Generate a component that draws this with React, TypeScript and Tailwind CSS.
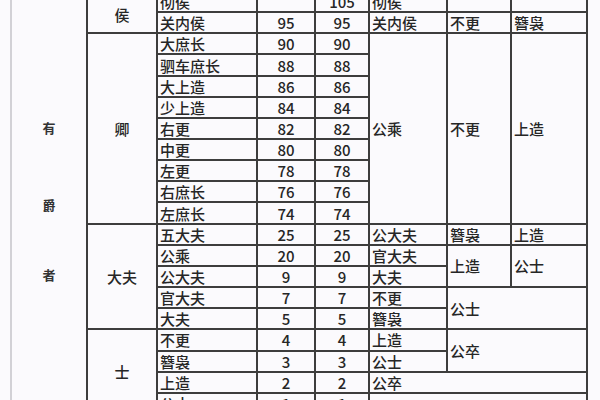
type Cell = { text: string; cls: string; center?: boolean };

// grid positions written out in full so tailwind picks them up
const cells: Cell[] = [
  // 侯
  { text: '侯', cls: 'col-start-2 row-start-1 row-span-2 pt-[5px]', center: true },
  { text: '彻侯', cls: 'col-start-3 row-start-1' },
  { text: '', cls: 'col-start-4 row-start-1', center: true },
  { text: '105', cls: 'col-start-5 row-start-1', center: true },
  { text: '彻侯', cls: 'col-start-6 row-start-1' },
  { text: '', cls: 'col-start-7 row-start-1' },
  { text: '', cls: 'col-start-8 row-start-1' },
  { text: '关内侯', cls: 'col-start-3 row-start-2' },
  { text: '95', cls: 'col-start-4 row-start-2', center: true },
  { text: '95', cls: 'col-start-5 row-start-2', center: true },
  { text: '关内侯', cls: 'col-start-6 row-start-2' },
  { text: '不更', cls: 'col-start-7 row-start-2' },
  { text: '簪袅', cls: 'col-start-8 row-start-2' },

  // 卿
  { text: '卿', cls: 'col-start-2 row-start-3 row-span-9', center: true },
  { text: '大庶长', cls: 'col-start-3 row-start-3' },
  { text: '90', cls: 'col-start-4 row-start-3', center: true },
  { text: '90', cls: 'col-start-5 row-start-3', center: true },
  { text: '驷车庶长', cls: 'col-start-3 row-start-4' },
  { text: '88', cls: 'col-start-4 row-start-4', center: true },
  { text: '88', cls: 'col-start-5 row-start-4', center: true },
  { text: '大上造', cls: 'col-start-3 row-start-5' },
  { text: '86', cls: 'col-start-4 row-start-5', center: true },
  { text: '86', cls: 'col-start-5 row-start-5', center: true },
  { text: '少上造', cls: 'col-start-3 row-start-6' },
  { text: '84', cls: 'col-start-4 row-start-6', center: true },
  { text: '84', cls: 'col-start-5 row-start-6', center: true },
  { text: '右更', cls: 'col-start-3 row-start-7' },
  { text: '82', cls: 'col-start-4 row-start-7', center: true },
  { text: '82', cls: 'col-start-5 row-start-7', center: true },
  { text: '中更', cls: 'col-start-3 row-start-8' },
  { text: '80', cls: 'col-start-4 row-start-8', center: true },
  { text: '80', cls: 'col-start-5 row-start-8', center: true },
  { text: '左更', cls: 'col-start-3 row-start-9' },
  { text: '78', cls: 'col-start-4 row-start-9', center: true },
  { text: '78', cls: 'col-start-5 row-start-9', center: true },
  { text: '右庶长', cls: 'col-start-3 row-start-10' },
  { text: '76', cls: 'col-start-4 row-start-10', center: true },
  { text: '76', cls: 'col-start-5 row-start-10', center: true },
  { text: '左庶长', cls: 'col-start-3 row-start-11' },
  { text: '74', cls: 'col-start-4 row-start-11', center: true },
  { text: '74', cls: 'col-start-5 row-start-11', center: true },
  { text: '公乘', cls: 'col-start-6 row-start-3 row-span-9' },
  { text: '不更', cls: 'col-start-7 row-start-3 row-span-9' },
  { text: '上造', cls: 'col-start-8 row-start-3 row-span-9' },

  // 大夫
  { text: '大夫', cls: 'col-start-2 row-start-12 row-span-5', center: true },
  { text: '五大夫', cls: 'col-start-3 row-start-12' },
  { text: '25', cls: 'col-start-4 row-start-12', center: true },
  { text: '25', cls: 'col-start-5 row-start-12', center: true },
  { text: '公大夫', cls: 'col-start-6 row-start-12' },
  { text: '簪袅', cls: 'col-start-7 row-start-12' },
  { text: '上造', cls: 'col-start-8 row-start-12' },
  { text: '公乘', cls: 'col-start-3 row-start-13' },
  { text: '20', cls: 'col-start-4 row-start-13', center: true },
  { text: '20', cls: 'col-start-5 row-start-13', center: true },
  { text: '官大夫', cls: 'col-start-6 row-start-13' },
  { text: '上造', cls: 'col-start-7 row-start-13 row-span-2' },
  { text: '公士', cls: 'col-start-8 row-start-13 row-span-2' },
  { text: '公大夫', cls: 'col-start-3 row-start-14' },
  { text: '9', cls: 'col-start-4 row-start-14', center: true },
  { text: '9', cls: 'col-start-5 row-start-14', center: true },
  { text: '大夫', cls: 'col-start-6 row-start-14' },
  { text: '官大夫', cls: 'col-start-3 row-start-15' },
  { text: '7', cls: 'col-start-4 row-start-15', center: true },
  { text: '7', cls: 'col-start-5 row-start-15', center: true },
  { text: '不更', cls: 'col-start-6 row-start-15' },
  { text: '公士', cls: 'col-start-7 col-span-2 row-start-15 row-span-2' },
  { text: '大夫', cls: 'col-start-3 row-start-16' },
  { text: '5', cls: 'col-start-4 row-start-16', center: true },
  { text: '5', cls: 'col-start-5 row-start-16', center: true },
  { text: '簪袅', cls: 'col-start-6 row-start-16' },

  // 士
  { text: '士', cls: 'col-start-2 row-start-17 row-span-4', center: true },
  { text: '不更', cls: 'col-start-3 row-start-17' },
  { text: '4', cls: 'col-start-4 row-start-17', center: true },
  { text: '4', cls: 'col-start-5 row-start-17', center: true },
  { text: '上造', cls: 'col-start-6 row-start-17' },
  { text: '公卒', cls: 'col-start-7 col-span-2 row-start-17 row-span-2' },
  { text: '簪袅', cls: 'col-start-3 row-start-18' },
  { text: '3', cls: 'col-start-4 row-start-18', center: true },
  { text: '3', cls: 'col-start-5 row-start-18', center: true },
  { text: '公士', cls: 'col-start-6 row-start-18' },
  { text: '上造', cls: 'col-start-3 row-start-19' },
  { text: '2', cls: 'col-start-4 row-start-19', center: true },
  { text: '2', cls: 'col-start-5 row-start-19', center: true },
  { text: '公卒', cls: 'col-start-6 col-span-3 row-start-19' },
  { text: '公士', cls: 'col-start-3 row-start-20' },
  { text: '1', cls: 'col-start-4 row-start-20', center: true },
  { text: '1', cls: 'col-start-5 row-start-20', center: true },
  { text: '', cls: 'col-start-6 col-span-3 row-start-20' },
];

export default function App() {
  return (
    <div
      className="w-[600px] h-[400px] overflow-hidden bg-[#fbfafd] pl-[10px] text-[#262626]"
      style={{ fontFamily: '"Noto Sans CJK SC", "Noto Sans", sans-serif' }}
    >
      <div className="border-l-2 border-[#d2d1d6] h-[400px] overflow-hidden">
        <div className="-mt-[8px] h-[421px] w-[576px] grid grid-cols-[74px_68px_98px_56px_52px_76px_62px_74px] grid-rows-[repeat(20,minmax(0,1fr))] gap-[2px] pr-[2px] bg-[#3d3d3d]">
          {/* 有爵者 column */}
          <div className="col-start-1 row-start-1 row-span-20 bg-[#fbfafd] flex flex-col items-center pt-[129px] text-[13px] font-bold leading-[14px] text-[#333]">
            <span>有</span>
            <span className="mt-[63px]">爵</span>
            <span className="mt-[56px]">者</span>
          </div>
          {cells.map((c, i) => (
            <div
              key={i}
              className={`${c.cls} bg-[#fbfafd] flex items-center text-[15px] font-medium leading-none ${
                c.center ? 'justify-center' : 'pl-[2px]'
              }`}
            >
              {c.text}
            </div>
          ))}
        </div>
      </div>
    </div>
  );
}
